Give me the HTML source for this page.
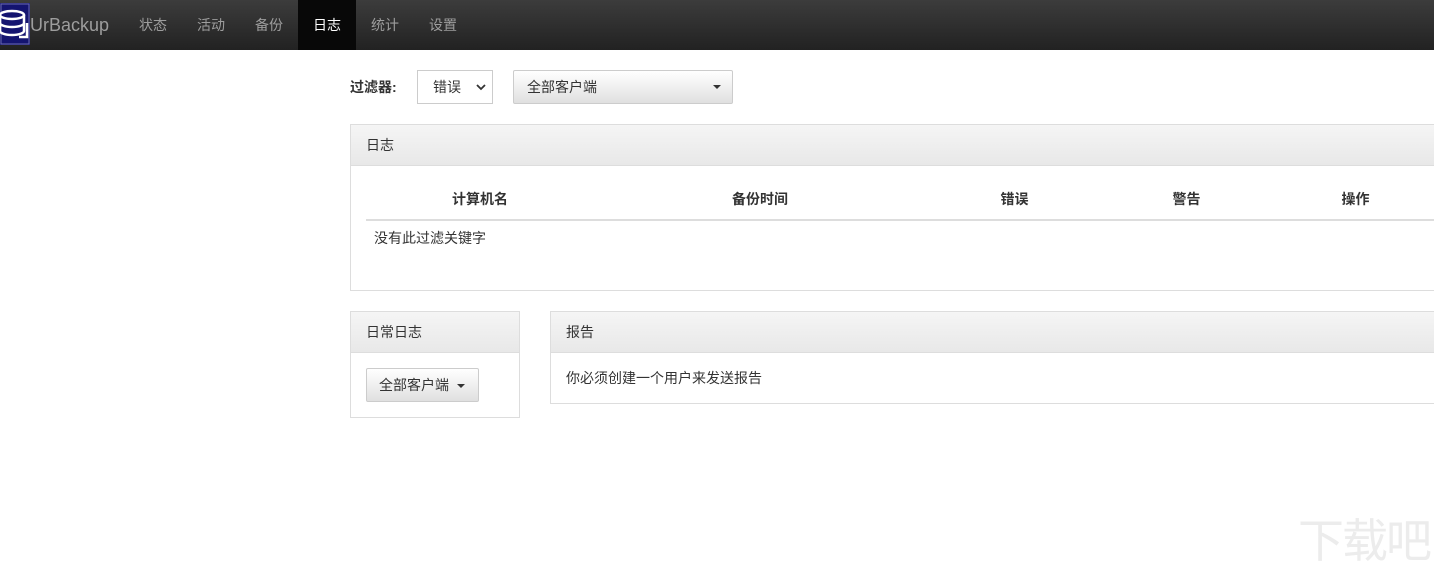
<!DOCTYPE html><html><head><meta charset="utf-8"><style>
body{margin:0;width:1434px;height:568px;overflow:hidden;background:#fff;font-family:"Liberation Sans","Noto Sans CJK SC",sans-serif;font-size:14px;color:#333;position:relative}
.nav{position:absolute;left:0;top:0;width:1434px;height:50px;background:linear-gradient(#3c3c3c,#222);}
.nav a{position:absolute;top:0;height:50px;line-height:50px;color:#9d9d9d;font-size:14px}
.box{position:absolute;border:1px solid #ddd;background:#fff}
.hd{background:linear-gradient(#f5f5f5,#e8e8e8);border-bottom:1px solid #ddd;height:40px;line-height:40px;padding-left:15px}
.btn{position:absolute;border:1px solid #ccc;border-radius:2px;background:linear-gradient(#fff,#e0e0e0)}
.caret{display:inline-block;border-left:4px solid transparent;border-right:4px solid transparent;border-top:4px solid #333;vertical-align:middle}
th{font-weight:bold}
</style></head><body>
<div class="nav">
<svg style="position:absolute;left:0;top:3px" width="30" height="42" viewBox="0 0 30 42"><rect width="30" height="42" fill="#141470"/><rect x="1" y="1" width="28" height="40" fill="none" stroke="#6b6bb0" stroke-width="1"/><g fill="none" stroke="#fff" stroke-width="2.5"><ellipse cx="12" cy="12" rx="12" ry="4"/><path d="M0 12v16c0 2 5 4 12 4M0 20c0 2 5 4 12 4s12-2 12-4M24 12v16c0 2-5 4-12 4"/><path d="M27 20l0 14-8 0"/></g></svg>
<a style="left:30px;font-size:18px">UrBackup</a>
<a style="left:139px">状态</a><a style="left:197px">活动</a><a style="left:255px">备份</a>
<a style="left:298px;width:58px;background:#080808;color:#fff;text-align:center">日志</a>
<a style="left:371px">统计</a><a style="left:429px">设置</a>
</div>
<div style="position:absolute;left:350px;top:77px;font-weight:bold">过滤器:</div>
<div style="position:absolute;left:417px;top:70px;width:74px;height:32px;border:1px solid #ccc;line-height:32px"><span style="margin-left:15px">错误</span><svg style="position:absolute;left:58px;top:13px" width="10" height="7" viewBox="0 0 10 7"><path d="M1 1l4 4 4-4" fill="none" stroke="#333" stroke-width="1.8"/></svg></div>
<div class="btn" style="left:513px;top:70px;width:218px;height:32px;line-height:32px"><span style="margin-left:13px">全部客户端</span><span class="caret" style="position:absolute;left:199px;top:14px"></span></div>
<div class="box" style="left:350px;top:124px;width:1090px;height:165px">
<div class="hd">日志</div>
<table style="position:absolute;left:15px;top:53px;width:1075px;border-collapse:collapse">
<tr style="height:42px;border-bottom:2px solid #ddd"><th style="width:226px">计算机名</th><th style="width:330px">备份时间</th><th style="width:175px">错误</th><th style="width:165px">警告</th><th>操作</th></tr>
<tr><td colspan="5" style="padding:7px 8px">没有此过滤关键字</td></tr></table>
</div>
<div class="box" style="left:350px;top:311px;width:168px;height:105px">
<div class="hd">日常日志</div>
<div class="btn" style="left:15px;top:56px;width:111px;height:32px;line-height:32px"><span style="margin-left:12px">全部客户端</span><span class="caret" style="margin-left:8px"></span></div>
</div>
<div class="box" style="left:550px;top:311px;width:890px;height:91px">
<div class="hd">报告</div>
<div style="padding:15px 15px">你必须创建一个用户来发送报告</div>
</div>
<div style="position:absolute;left:1298px;top:505px;font-size:46px;color:#ececec;letter-spacing:-2px">下载吧</div>
</body></html>
